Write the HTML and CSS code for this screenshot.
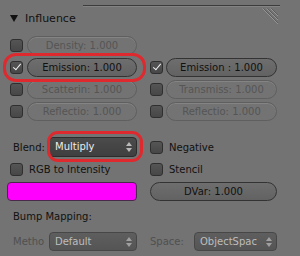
FILE: index.html
```html
<!DOCTYPE html>
<html lang="en">
<head>
  <meta charset="UTF-8">
  <title>Influence</title>
  <link rel="stylesheet" href="styles.css">
</head>
<body>
  <div class="panel">
    <div class="topline"></div>

    <div class="header">
      <span class="tri"></span>
      <span class="title">Influence</span>
      <svg class="grip" width="18" height="18" viewBox="0 0 18 18">
        <path d="M0.5 0.5 L16 16 M4.5 0.5 L16 12 M8.5 0.5 L16 8" stroke="#959595" stroke-width="1" fill="none"/>
        <path d="M1.5 0.5 L16 15 M5.5 0.5 L16 11 M9.5 0.5 L16 7" stroke="#5c5c5c" stroke-width="1" fill="none"/>
      </svg>
    </div>

    <div class="slots">
      <div class="slot first">
        <span class="check"></span>
        <span class="num off">Density: 1.000</span>
      </div>
      <div class="slot"></div>

      <div class="slot first">
        <span class="check on"></span>
        <span class="num">Emission: 1.000</span>
      </div>
      <div class="slot">
        <span class="check on"></span>
        <span class="num">Emission : 1.000</span>
      </div>

      <div class="slot first">
        <span class="check"></span>
        <span class="num off">Scatterin: 1.000</span>
      </div>
      <div class="slot">
        <span class="check"></span>
        <span class="num off">Transmiss: 1.000</span>
      </div>

      <div class="slot first">
        <span class="check"></span>
        <span class="num off">Reflectio: 1.000</span>
      </div>
      <div class="slot">
        <span class="check"></span>
        <span class="num off">Reflectio: 1.000</span>
      </div>
    </div>

    <div class="row blend-row">
      <div class="field">
        <span class="label">Blend:</span>
        <span class="select">Multiply<span class="arrows"></span></span>
      </div>
      <div class="toggle">
        <span class="check"></span>
        <span>Negative</span>
      </div>
    </div>

    <div class="row rgb-row">
      <div class="toggle first">
        <span class="check"></span>
        <span>RGB to Intensity</span>
      </div>
      <div class="toggle">
        <span class="check"></span>
        <span>Stencil</span>
      </div>
    </div>

    <div class="row color-row">
      <div class="swatch"></div>
      <span class="num">DVar: 1.000</span>
    </div>

    <div class="section-label">Bump Mapping:</div>

    <div class="row method-row">
      <div class="field">
        <span class="label dim">Metho</span>
        <span class="select dim">Default<span class="arrows"></span></span>
      </div>
      <div class="field space">
        <span class="label dim">Space:</span>
        <span class="select dim">ObjectSpac<span class="arrows"></span></span>
      </div>
    </div>

    <!-- red marks drawn over the screenshot -->
    <div class="mark mark-emission"></div>
    <div class="mark mark-blend"></div>
  </div>
</body>
</html>
```

FILE: styles.css
```css
/* Blender style texture influence panel */
body {
  margin: 0;
  background-color: #737373;
  font-family: "DejaVu Sans", "Liberation Sans", sans-serif;
  font-size: 10px;
  color: #111;
}

.panel {
  position: relative;
  width: 300px;
  height: 256px;
  overflow: hidden;
  padding: 5px 0 0 7px;
  box-sizing: border-box;
}

.topline {
  height: 1px;
  margin-left: 76px;
  width: 197px;
  background-color: #3c3c3c;
  border-bottom: 1px solid #838383;
}

.header {
  display: flex;
  align-items: center;
  height: 22px;
  width: 273px;
}

.tri {
  width: 0;
  height: 0;
  margin-left: 3px;
  border-left: 4px solid transparent;
  border-right: 4px solid transparent;
  border-top: 7px solid #111;
}

.title {
  margin-left: 7px;
  font-size: 11px;
  color: #111;
}

.grip {
  margin-left: auto;
  align-self: flex-start;
  margin-top: 1px;
}

.slots {
  display: grid;
  grid-template-columns: 130px 127px;
  column-gap: 13px;
  row-gap: 3px;
  grid-auto-rows: 19px;
  margin-top: 7px;
}

.slot {
  display: flex;
  align-items: center;
  gap: 3px;
}

.slot.first {
  padding-left: 3px;
  gap: 4px;
}

.check {
  position: relative;
  flex: none;
  width: 13px;
  height: 13px;
  box-sizing: border-box;
  border: 1px solid #2f2f2f;
  border-radius: 3px;
  background: linear-gradient(#555555, #474747);
}

.check.on::after {
  content: "";
  position: absolute;
  left: 4px;
  top: 0px;
  width: 3px;
  height: 7px;
  border-right: 1.5px solid #f2f2f2;
  border-bottom: 1.5px solid #f2f2f2;
  transform: rotate(40deg);
}

.num {
  flex: 1;
  height: 19px;
  box-sizing: border-box;
  border: 1px solid #333;
  border-radius: 10px;
  background: linear-gradient(#6e6e6e, #626262);
  text-align: center;
  line-height: 17px;
  color: #111;
  white-space: nowrap;
}

.num.off {
  border-color: #5f5f5f;
  background: #737373;
  box-shadow: inset 0 1px 0 rgba(255, 255, 255, 0.12);
  color: #555;
}

.row {
  display: grid;
  grid-template-columns: 130px 127px;
  column-gap: 13px;
  height: 19px;
}

.blend-row {
  margin-top: 16px;
}

.rgb-row {
  margin-top: 4px;
}

.color-row {
  margin-top: 3px;
}

.method-row {
  margin-top: 5px;
}

.field {
  display: flex;
  align-items: center;
}

.label {
  width: 42px;
  padding-left: 6px;
  box-sizing: border-box;
  flex: none;
}

.space .label {
  width: 44px;
  padding-left: 0;
}

.label.dim {
  color: #505050;
}

.select {
  position: relative;
  flex: 1;
  height: 20px;
  box-sizing: border-box;
  border: 1px solid #2c2c2c;
  border-radius: 4px;
  background: linear-gradient(#4b4b4b, #3f3f3f);
  color: #ececec;
  line-height: 18px;
  padding-left: 5px;
  white-space: nowrap;
  overflow: hidden;
}

.select.dim {
  height: 19px;
  line-height: 17px;
  border-color: #474747;
  background: linear-gradient(#5e5e5e, #555555);
  color: #bdbdbd;
}

.arrows {
  position: absolute;
  right: 4px;
  top: 4px;
  width: 0;
  height: 0;
  border-left: 3px solid transparent;
  border-right: 3px solid transparent;
  border-bottom: 4px solid #b9b9b9;
}

.arrows::after {
  content: "";
  position: absolute;
  left: -3px;
  top: 6px;
  border-left: 3px solid transparent;
  border-right: 3px solid transparent;
  border-top: 4px solid #b9b9b9;
}

.select.dim .arrows,
.select.dim .arrows::after {
  border-bottom-color: #a0a0a0;
  border-top-color: #a0a0a0;
}

.select.dim .arrows::after {
  border-bottom-color: transparent;
}

.toggle {
  display: flex;
  align-items: center;
  gap: 6px;
}

.toggle.first {
  padding-left: 3px;
}

.swatch {
  height: 19px;
  box-sizing: border-box;
  border: 1px solid #4a2a4a;
  border-radius: 4px;
  background-color: #ff00ff;
}

.section-label {
  height: 20px;
  line-height: 20px;
  margin-top: 6px;
  padding-left: 6px;
}

.mark {
  position: absolute;
  border: 3px solid #de2a2e;
}

.mark-emission {
  left: 3px;
  top: 53px;
  width: 137px;
  height: 23px;
  border-radius: 13px;
}

.mark-blend {
  left: 47px;
  top: 131px;
  width: 90px;
  height: 25px;
  border-radius: 11px;
}
```
